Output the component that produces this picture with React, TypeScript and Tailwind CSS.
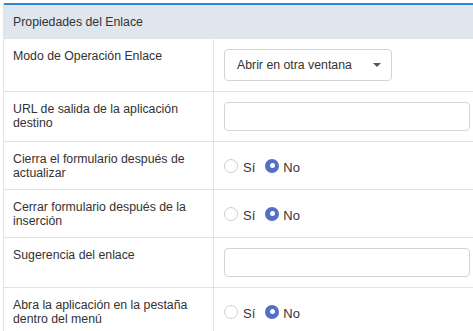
import React from 'react';

type Field =
    | { label: string; kind: 'select'; value: string }
    | { label: string; kind: 'input' }
    | { label: string; kind: 'radio'; checked: 'si' | 'no' };

const fields: Field[] = [
    { label: 'Modo de Operación Enlace', kind: 'select', value: 'Abrir en otra ventana' },
    { label: 'URL de salida de la aplicación destino', kind: 'input' },
    { label: 'Cierra el formulario después de actualizar', kind: 'radio', checked: 'no' },
    { label: 'Cerrar formulario después de la inserción', kind: 'radio', checked: 'no' },
    { label: 'Sugerencia del enlace', kind: 'input' },
    { label: 'Abra la aplicación en la pestaña dentro del menú', kind: 'radio', checked: 'no' },
];

function Radio({ on }: { on: boolean }) {
    if (on) {
        return (
            <span className="flex h-[14px] w-[14px] items-center justify-center rounded-full bg-[#5470c6]">
                <span className="h-[5px] w-[5px] rounded-full bg-white" />
            </span>
        );
    }
    return <span className="h-[14px] w-[14px] rounded-full border border-[#cfcfcf] bg-white" />;
}

function Value({ field }: { field: Field }) {
    if (field.kind === 'select') {
        return (
            <div className="flex h-[32px] w-[168px] items-center justify-between rounded-[4px] border border-[#d4d4d4] bg-white pl-[12px] pr-[10px]">
                <span>{field.value}</span>
                <span className="h-0 w-0 border-x-[4px] border-t-[4px] border-x-transparent border-t-[#555]" />
            </div>
        );
    }
    if (field.kind === 'input') {
        return <div className="h-[29px] w-full rounded-[4px] border border-[#d4d4d4] bg-white" />;
    }
    return (
        <div className="flex items-center">
            <Radio on={field.checked === 'si'} />
            <span className="ml-[5px] mt-[5px] text-[13px]">Sí</span>
            <span className="ml-[10px]">
                <Radio on={field.checked === 'no'} />
            </span>
            <span className="ml-[4px] mt-[5px] text-[13px]">No</span>
        </div>
    );
}

export default function App() {
    return (
        <div className="h-[331px] w-[473px] overflow-hidden bg-white pl-[3px] pt-[3px] font-['Liberation_Sans',Arial,sans-serif] text-[12.3px] leading-[14px] text-[#333]">
            <div className="w-[477px] border-l border-[#e2e2e2]">
                <div className="flex h-[35px] items-center border-t-2 border-[#2f86d4] bg-[#e0e6ee] pl-[9px]">
                    Propiedades del Enlace
                </div>
                {fields.map((f) => (
                    <div key={f.label} className="flex border-t border-[#e2e2e2]">
                        <div className="w-[210px] shrink-0 border-r border-[#e2e2e2] pb-[9px] pl-[9px] pr-[10px] pt-[10px]">
                            {f.label}
                        </div>
                        <div className="flex flex-1 items-center px-[10px] py-[10px]">
                            <Value field={f} />
                        </div>
                    </div>
                ))}
            </div>
        </div>
    );
}
